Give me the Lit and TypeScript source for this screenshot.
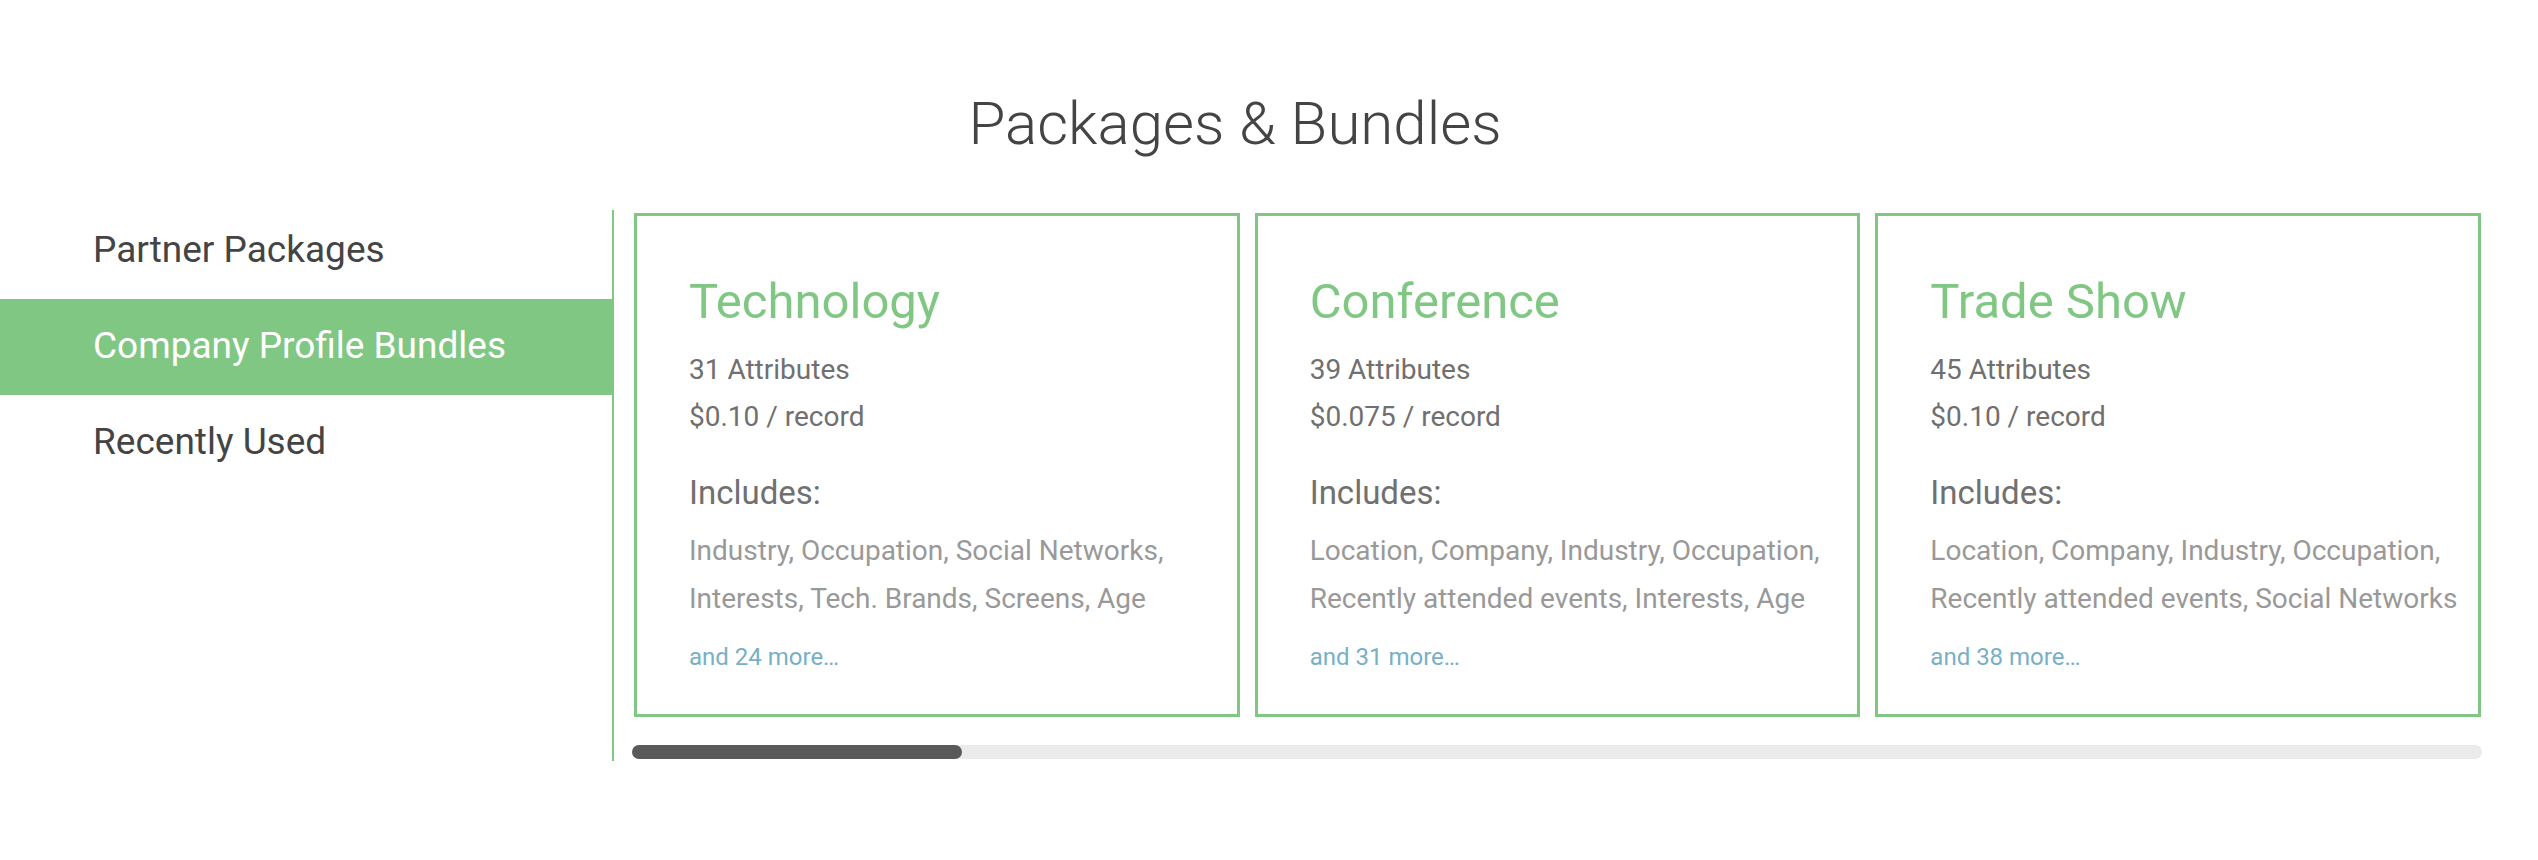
import { LitElement, html, css } from "lit";
import { customElement, state } from "lit/decorators.js";

interface Bundle {
  name: string;
  attributes: number;
  price: string;
  lines: string[];
  more: number;
}

const TABS = ["Partner Packages", "Company Profile Bundles", "Recently Used"];

const BUNDLES: Bundle[] = [
  {
    name: "Technology",
    attributes: 31,
    price: "$0.10",
    lines: ["Industry, Occupation, Social Networks,", "Interests, Tech. Brands, Screens, Age"],
    more: 24,
  },
  {
    name: "Conference",
    attributes: 39,
    price: "$0.075",
    lines: ["Location, Company, Industry, Occupation,", "Recently attended events, Interests, Age"],
    more: 31,
  },
  {
    name: "Trade Show",
    attributes: 45,
    price: "$0.10",
    lines: ["Location, Company, Industry, Occupation,", "Recently attended events, Social Networks"],
    more: 38,
  },
];

@customElement("bundle-card")
class BundleCard extends LitElement {
  static properties = { bundle: { attribute: false } };
  declare bundle: Bundle;

  static styles = css`
    :host {
      display: block;
      box-sizing: border-box;
      min-width: 0;
      padding: 54px 0 35px 52px;
      border: 3px solid #81c784;
      white-space: nowrap;
    }
    .name {
      margin: 0 0 12px;
      font-size: 49px;
      line-height: 64px;
      font-weight: 400;
      color: #81c784;
    }
    .fact {
      margin: 0;
      font-size: 28px;
      line-height: 47px;
      color: #707070;
    }
    .label {
      margin: 29px 0 10px;
      font-size: 33px;
      line-height: 48px;
      font-weight: 400;
      color: #707070;
    }
    .list {
      margin: 0;
      font-size: 28px;
      line-height: 48px;
      color: #999;
    }
    .more {
      display: inline-block;
      margin-top: 12px;
      font-size: 24px;
      line-height: 44px;
      color: #77b0c6;
      text-decoration: none;
    }
  `;

  render() {
    const b = this.bundle;
    return html`
      <h2 class="name">${b.name}</h2>
      <p class="fact">${b.attributes} Attributes</p>
      <p class="fact">${b.price} / record</p>
      <h3 class="label">Includes:</h3>
      ${b.lines.map((line) => html`<p class="list">${line}</p>`)}
      <a class="more" href="#">and ${b.more} more…</a>
    `;
  }
}

@customElement("app-root")
class AppRoot extends LitElement {
  @state() private selected = 1;

  static styles = css`
    :host {
      display: block;
      padding-bottom: 99px;
      background: #fff;
      font-family: Roboto, sans-serif;
    }
    .title {
      margin: 0;
      padding: 84px 68px 46px 0;
      text-align: center;
      font-size: 60px;
      line-height: 80px;
      font-weight: 300;
      color: #444;
    }
    .body {
      display: grid;
      grid-template-columns: 614px minmax(0, 1fr);
    }
    .tabs {
      border-right: 2px solid #81c784;
    }
    .tab {
      display: block;
      width: 100%;
      padding: 23px 0 25px 93px;
      border: 0;
      background: none;
      text-align: left;
      font: 400 37px/48px Roboto, sans-serif;
      color: #444;
      cursor: pointer;
    }
    .tab:first-child {
      padding-top: 16px;
    }
    .tab.on {
      background: #81c784;
      color: #fff;
    }
    .content {
      padding: 3px 56px 2px 18px;
    }
    .cards {
      display: grid;
      grid-template-columns: repeat(3, minmax(0, 1fr));
      gap: 15px;
      margin: 0 1px 28px 2px;
    }
    .track {
      height: 14px;
      border-radius: 7px;
      background: #ebebeb;
    }
    .thumb {
      width: calc(100% * 5 / 28);
      height: 100%;
      border-radius: 7px;
      background: #5a5a5a;
    }
  `;

  render() {
    return html`
      <h1 class="title">Packages &amp; Bundles</h1>
      <div class="body">
        <nav class="tabs">
          ${TABS.map(
            (tab, i) => html`<button
              class="tab ${i === this.selected ? "on" : ""}"
              @click=${() => (this.selected = i)}
            >${tab}</button>`
          )}
        </nav>
        <div class="content">
          <div class="cards">
            ${BUNDLES.map((b) => html`<bundle-card .bundle=${b}></bundle-card>`)}
          </div>
          <div class="track"><div class="thumb"></div></div>
        </div>
      </div>
    `;
  }
}
